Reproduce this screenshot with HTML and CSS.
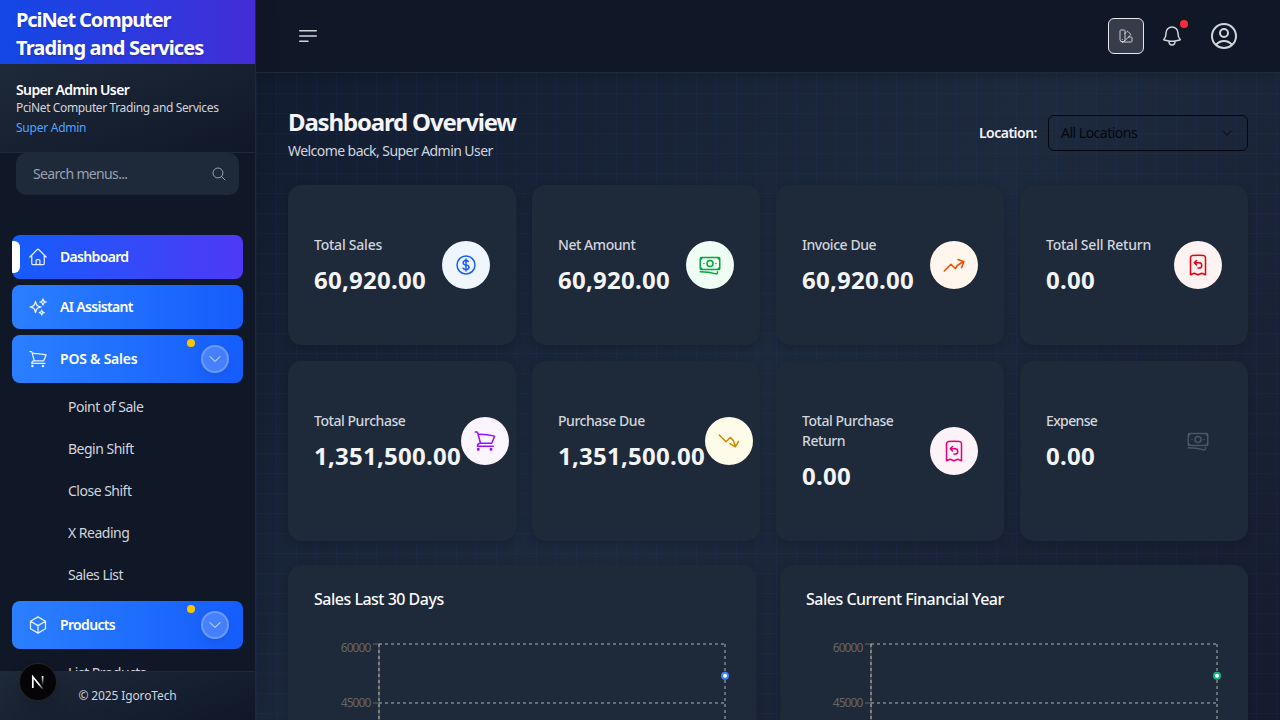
FILE: index.html
```html
<!DOCTYPE html>
<html lang="en">
<head>
<meta charset="utf-8">
<title>Dashboard</title>
<link rel="stylesheet" href="styles.css">
</head>
<body>
<svg class="defs" width="0" height="0">
  <symbol id="home" viewBox="0 0 24 24"><path d="m2.25 12 8.954-8.955c.44-.439 1.152-.439 1.591 0L21.75 12M4.5 9.75v10.125c0 .621.504 1.125 1.125 1.125H9.75v-4.875c0-.621.504-1.125 1.125-1.125h2.25c.621 0 1.125.504 1.125 1.125V21h4.125c.621 0 1.125-.504 1.125-1.125V9.75M8.25 21h8.25"/></symbol>
  <symbol id="sparkles" viewBox="0 0 24 24"><path d="M9.813 15.904 9 18.75l-.813-2.846a4.5 4.5 0 0 0-3.09-3.09L2.25 12l2.846-.813a4.5 4.5 0 0 0 3.09-3.09L9 5.25l.813 2.846a4.5 4.5 0 0 0 3.09 3.09L15.75 12l-2.846.813a4.5 4.5 0 0 0-3.09 3.09ZM18.259 8.715 18 9.75l-.259-1.035a3.375 3.375 0 0 0-2.455-2.456L14.25 6l1.036-.259a3.375 3.375 0 0 0 2.455-2.456L18 2.25l.259 1.035a3.375 3.375 0 0 0 2.456 2.456L21.75 6l-1.035.259a3.375 3.375 0 0 0-2.456 2.456ZM16.894 20.567 16.5 21.75l-.394-1.183a2.25 2.25 0 0 0-1.423-1.423L13.5 18.75l1.183-.394a2.25 2.25 0 0 0 1.423-1.423l.394-1.183.394 1.183a2.25 2.25 0 0 0 1.423 1.423l1.183.394-1.183.394a2.25 2.25 0 0 0-1.423 1.423Z"/></symbol>
  <symbol id="cart" viewBox="0 0 24 24"><path d="M2.25 3h1.386c.51 0 .955.343 1.087.835l.383 1.437M7.5 14.25a3 3 0 0 0-3 3h15.75m-12.75-3h11.218c1.121-2.3 2.1-4.684 2.924-7.138a60.114 60.114 0 0 0-16.536-1.84M7.5 14.25 5.106 5.272M6 20.25a.75.75 0 1 1-1.5 0 .75.75 0 0 1 1.5 0Zm12.75 0a.75.75 0 1 1-1.5 0 .75.75 0 0 1 1.5 0Z"/></symbol>
  <symbol id="cube" viewBox="0 0 24 24"><path d="m21 7.5-9-5.25L3 7.5m18 0-9 5.25m9-5.25v9l-9 5.25M3 7.5l9 5.25M3 7.5v9l9 5.25m0-9v9"/></symbol>
  <symbol id="search" viewBox="0 0 24 24"><path d="m21 21-5.197-5.197m0 0A7.5 7.5 0 1 0 5.196 5.196a7.5 7.5 0 0 0 10.607 10.607Z"/></symbol>
  <symbol id="chevron" viewBox="0 0 24 24"><path d="m19.5 8.25-7.5 7.5-7.5-7.5"/></symbol>
  <symbol id="caret" viewBox="0 0 24 24"><path d="m6 9 6 6 6-6"/></symbol>
  <symbol id="bell" viewBox="0 0 24 24"><path d="M14.857 17.082a23.848 23.848 0 0 0 5.454-1.31A8.967 8.967 0 0 1 18 9.75V9A6 6 0 0 0 6 9v.75a8.967 8.967 0 0 1-2.312 6.022c1.733.64 3.56 1.085 5.455 1.31m5.714 0a24.255 24.255 0 0 1-5.714 0m5.714 0a3 3 0 1 1-5.714 0"/></symbol>
  <symbol id="user" viewBox="0 0 24 24"><path d="M17.982 18.725A7.488 7.488 0 0 0 12 15.75a7.488 7.488 0 0 0-5.982 2.975m11.963 0a9 9 0 1 0-11.963 0m11.963 0A8.966 8.966 0 0 1 12 21a8.966 8.966 0 0 1-5.982-2.275M15 9.75a3 3 0 1 1-6 0 3 3 0 0 1 6 0Z"/></symbol>
  <symbol id="dollar" viewBox="0 0 24 24"><path d="M12 6v12m-3-2.818.879.659c1.171.879 3.07.879 4.242 0 1.172-.879 1.172-2.303 0-3.182C13.536 12.219 12.768 12 12 12c-.725 0-1.45-.22-2.003-.659-1.106-.879-1.106-2.303 0-3.182s2.9-.879 4.006 0l.415.33M21 12a9 9 0 1 1-18 0 9 9 0 0 1 18 0Z"/></symbol>
  <symbol id="banknotes" viewBox="0 0 24 24"><path d="M2.25 18.75a60.07 60.07 0 0 1 15.797 2.101c.727.198 1.453-.342 1.453-1.096V18.75M3.75 4.5v.75A.75.75 0 0 1 3 6h-.75m0 0v-.375c0-.621.504-1.125 1.125-1.125H20.25M2.25 6v9m18-10.5v.75c0 .414.336.75.75.75h.75m-1.5-1.5h.375c.621 0 1.125.504 1.125 1.125v9.75c0 .621-.504 1.125-1.125 1.125h-.375m1.5-1.5H21a.75.75 0 0 0-.75.75v.75m0 0H3.75m0 0h-.375a1.125 1.125 0 0 1-1.125-1.125V15m1.5 1.5v-.75A.75.75 0 0 0 3 15h-.75M15 10.5a3 3 0 1 1-6 0 3 3 0 0 1 6 0Zm3 0h.008v.008H18V10.5Zm-12 0h.008v.008H6V10.5Z"/></symbol>
  <symbol id="up" viewBox="0 0 24 24"><path d="M2.25 18 9 11.25l4.306 4.306a11.95 11.95 0 0 1 5.814-5.518l2.74-1.22m0 0-5.94-2.281m5.94 2.28-2.28 5.941"/></symbol>
  <symbol id="down" viewBox="0 0 24 24"><path d="M2.25 6 9 12.75l4.286-4.286a11.948 11.948 0 0 1 4.306 6.43l.776 2.898m0 0 3.182-5.511m-3.182 5.51-5.511-3.181"/></symbol>
  <symbol id="refund" viewBox="0 0 24 24"><path d="M8.25 9.75h4.875a2.625 2.625 0 0 1 0 5.25H12M8.25 9.75 10.5 7.5M8.25 9.75 10.5 12m9-7.243V21.75l-3.75-1.5-3.75 1.5-3.75-1.5-3.75 1.5V4.757c0-1.108.806-2.057 1.907-2.185a48.507 48.507 0 0 1 11.186 0c1.1.128 1.907 1.077 1.907 2.185Z"/></symbol>
  <symbol id="swatch" viewBox="0 0 24 24"><path d="M4.098 19.902a3.75 3.75 0 0 0 5.304 0l6.401-6.402M6.75 21A3.75 3.75 0 0 1 3 17.25V4.125C3 3.504 3.504 3 4.125 3h5.25c.621 0 1.125.504 1.125 1.125v4.072M6.75 21a3.75 3.75 0 0 0 3.75-3.75V8.197M6.75 21h13.125c.621 0 1.125-.504 1.125-1.125v-5.25c0-.621-.504-1.125-1.125-1.125h-4.072M10.5 8.197l2.88-2.88c.438-.439 1.15-.439 1.59 0l3.712 3.713c.44.44.44 1.152 0 1.59l-2.879 2.88M6.75 17.25h.008v.008H6.75v-.008Z"/></symbol>
  <symbol id="bars" viewBox="0 0 24 24"><path d="M3.75 6.75h16.5M3.75 12h16.5m-16.5 5.25H12"/></symbol>
</svg>
<div class="app">
  <aside class="sidebar">
    <div class="brand"><div class="brand-top">PciNet Computer</div><div>Trading and Services</div></div>
    <div class="profile">
      <div class="profile-name">Super Admin User</div>
      <div class="profile-org">PciNet Computer Trading and Services</div>
      <div class="profile-role">Super Admin</div>
    </div>
    <div class="search"><span>Search menus...</span><svg class="icon i16"><use href="#search"/></svg></div>
    <nav class="nav">
      <a class="item active"><svg class="icon i20"><use href="#home"/></svg><span>Dashboard</span></a>
      <a class="item"><svg class="icon i20"><use href="#sparkles"/></svg><span>AI Assistant</span></a>
      <a class="item group"><svg class="icon i20"><use href="#cart"/></svg><span class="loose">POS &amp; Sales</span><b class="toggle"><svg class="icon i16"><use href="#chevron"/></svg></b></a>
      <div class="sub">
        <a>Point of Sale</a><a>Begin Shift</a><a>Close Shift</a><a>X Reading</a><a>Sales List</a>
      </div>
      <a class="item group"><svg class="icon i20"><use href="#cube"/></svg><span>Products</span><b class="toggle"><svg class="icon i16"><use href="#chevron"/></svg></b></a>
      <div class="sub"><a>List Products</a></div>
    </nav>
    <div class="footer">© 2025 IgoroTech</div>
    <div class="badge"><svg width="36" height="36" viewBox="0 0 36 36" fill="none"><defs><linearGradient id="nd" x1="16" y1="15" x2="23" y2="24" gradientUnits="userSpaceOnUse"><stop offset=".5" stop-color="#fff"/><stop offset="1" stop-color="#fff" stop-opacity=".2"/></linearGradient><linearGradient id="nv" x1="0" y1="12" x2="0" y2="21" gradientUnits="userSpaceOnUse"><stop stop-color="#fff"/><stop offset="1" stop-color="#fff" stop-opacity="0"/></linearGradient></defs><path d="M12.8 24V12.8L22.8 25" stroke="url(#nd)" stroke-width="1.7"/><path d="M22.6 12v9" stroke="url(#nv)" stroke-width="1.7"/></svg></div>
  </aside>
  <div class="page">
    <header class="topbar">
      <svg class="icon i24"><use href="#bars"/></svg>
      <div class="actions">
        <button class="theme"><svg class="icon i16"><use href="#swatch"/></svg></button>
        <div class="bell"><svg class="icon i24"><use href="#bell"/></svg></div>
        <svg class="icon i32"><use href="#user"/></svg>
      </div>
    </header>
    <main class="content">
      <div class="heading">
        <div>
          <h1>Dashboard Overview</h1>
          <p>Welcome back, Super Admin User</p>
        </div>
        <div class="location"><label>Location:</label><div class="select"><span>All Locations</span><svg class="icon i16"><use href="#caret"/></svg></div></div>
      </div>
      <section class="cards">
        <div class="card"><div class="stat"><h3 class="loose">Total Sales</h3><strong>60,920.00</strong></div><div class="dot blue"><svg class="icon i24"><use href="#dollar"/></svg></div></div>
        <div class="card"><div class="stat"><h3>Net Amount</h3><strong>60,920.00</strong></div><div class="dot green"><svg class="icon i24"><use href="#banknotes"/></svg></div></div>
        <div class="card"><div class="stat"><h3>Invoice Due</h3><strong>60,920.00</strong></div><div class="dot orange"><svg class="icon i24"><use href="#up"/></svg></div></div>
        <div class="card"><div class="stat"><h3 class="loose">Total Sell Return</h3><strong>0.00</strong></div><div class="dot red"><svg class="icon i24"><use href="#refund"/></svg></div></div>
        <div class="card"><div class="stat"><h3>Total Purchase</h3><strong>1,351,500.00</strong></div><div class="dot purple"><svg class="icon i24"><use href="#cart"/></svg></div></div>
        <div class="card"><div class="stat"><h3>Purchase Due</h3><strong>1,351,500.00</strong></div><div class="dot yellow"><svg class="icon i24"><use href="#down"/></svg></div></div>
        <div class="card"><div class="stat"><h3>Total Purchase<br>Return</h3><strong>0.00</strong></div><div class="dot pink"><svg class="icon i24"><use href="#refund"/></svg></div></div>
        <div class="card"><div class="stat"><h3 class="tight">Expense</h3><strong>0.00</strong></div><div class="dot plain"><svg class="icon i24"><use href="#banknotes"/></svg></div></div>
      </section>
      <section class="charts">
        <div class="panel">
          <h2>Sales Last 30 Days</h2>
          <svg class="chart" width="416" height="300">
            <g class="axis"><path d="M65 5V239M59 5h6M59 64h6M59 122h6"/></g>
            <g class="grid"><path d="M65 5H411M65 64H411M65 122H411M65 5V239M411 5V239"/></g>
            <text x="56.5" y="13">60000</text><text x="56.5" y="68">45000</text>
            <circle cx="411" cy="36.7" r="3" class="pt-blue"/>
          </svg>
        </div>
        <div class="panel">
          <h2>Sales Current Financial Year</h2>
          <svg class="chart" width="416" height="300">
            <g class="axis"><path d="M65 5V239M59 5h6M59 64h6M59 122h6"/></g>
            <g class="grid"><path d="M65 5H411M65 64H411M65 122H411M65 5V239M411 5V239"/></g>
            <text x="56.5" y="13">60000</text><text x="56.5" y="68">45000</text>
            <circle cx="411" cy="36.7" r="3" class="pt-green"/>
          </svg>
        </div>
      </section>
    </main>
  </div>
</div>
</body>
</html>
```
FILE: styles.css
```css
* { box-sizing: border-box; margin: 0; padding: 0; }
body { width: 1280px; height: 720px; overflow: hidden; background: #101828; font-family: "Noto Sans", "Open Sans", sans-serif; font-size: 14px; line-height: 20px; letter-spacing: -.5px; color: #f3f4f6; }
.defs { position: absolute; }
.icon { fill: none; stroke: currentColor; stroke-width: 1.5; stroke-linecap: round; stroke-linejoin: round; flex: none; display: block; }
.i16 { width: 16px; height: 16px; }
.i20 { width: 20px; height: 20px; }
.i24 { width: 24px; height: 24px; }
.i32 { width: 32px; height: 32px; }
.app { display: flex; height: 720px; }

.sidebar { position: relative; width: 256px; flex: none; display: flex; flex-direction: column; border-right: 1px solid #1e2939; background: #101828; box-shadow: 0 0 24px rgba(0,0,0,.12); z-index: 2; }
.brand { height: 64px; padding: 6px 16px; line-height: 28px; font-size: 20px; font-weight: 700; color: #fff; background: linear-gradient(90deg, #1447e6, #432dd7); white-space: nowrap; flex: none; text-shadow: 0 1px 2px rgba(0,0,0,.2); letter-spacing: -.87px; }
.brand-top { letter-spacing: -1.1px; }
.profile { height: 89px; flex: none; padding: 16px; border-bottom: 1px solid #1e2939; background: linear-gradient(160deg, #1e2939, #101828); white-space: nowrap; }
.profile-name { font-weight: 600; color: #fff; letter-spacing: -.62px; }
.profile-org { font-size: 12px; line-height: 16px; color: #d1d5dc; letter-spacing: -.37px; }
.profile-role { font-size: 12px; line-height: 16px; margin-top: 4px; color: #51a2ff; letter-spacing: -.25px; }
.search { flex: none; height: 42px; margin: 0 16px; padding: 0 12px 0 17px; display: flex; align-items: center; justify-content: space-between; background: #1e2939; border-radius: 10px; color: #99a1af; letter-spacing: -.65px; }
.nav { flex: 1; min-height: 0; overflow: hidden; padding: 40px 12px 0; display: flex; flex-direction: column; }
.item { position: relative; flex: none; height: 44px; margin-bottom: 6px; padding: 0 14px 0 16px; display: flex; align-items: center; gap: 12px; border-radius: 8px; background: linear-gradient(90deg, #2b7fff, #155dfc); color: #fff; font-weight: 600; letter-spacing: -.67px; overflow: hidden; }
.item.active { background: linear-gradient(90deg, #155dfc, #4f39f6); }
.item.active::before { content: ""; position: absolute; left: 0; top: 6px; width: 8px; height: 32px; background: #fff; border-radius: 0 6px 6px 0; }
.item.group { height: 48px; margin-bottom: 3px; }
.item.group::after { content: ""; position: absolute; right: 48px; top: 4px; width: 8px; height: 8px; border-radius: 50%; background: #fdc700; }
.item .icon { opacity: .9; }
.toggle { width: 28px; height: 28px; margin-left: auto; border-radius: 50%; border: 2px solid rgba(255,255,255,.2); background: rgba(255,255,255,.2); display: flex; align-items: center; justify-content: center; box-shadow: 0 4px 8px rgba(0,0,0,.08); }
.sub { flex: none; padding-left: 56px; margin-bottom: 5px; }
.sub a { display: flex; align-items: center; height: 42px; color: #d1d5dc; }
.loose { letter-spacing: -.23px; }
.tight { letter-spacing: -.65px; }
.footer { flex: none; height: 49px; border-top: 1px solid #1e2939; background: linear-gradient(160deg, #1e2939, #101828); text-align: center; font-size: 12px; line-height: 48px; color: #d1d5dc; letter-spacing: -.12px; }
.badge { position: absolute; left: 20px; top: 664px; width: 36px; height: 36px; border-radius: 50%; background: #050507; box-shadow: 0 0 0 1px #232323, 0 12px 24px -8px rgba(0,0,0,.4); }

.page { flex: 1; min-width: 0; display: flex; flex-direction: column; }
.topbar { flex: none; height: 73px; padding: 0 40px; display: flex; align-items: center; justify-content: space-between; background: #101828; border-bottom: 1px solid #1e2939; color: #d1d5dc; box-shadow: 0 2px 8px rgba(0,0,0,.2); position: relative; }
.actions { display: flex; align-items: center; gap: 16px; }
.theme { width: 36px; height: 36px; border: 1px solid #e5e7eb; border-radius: 6px; background: #363c49; color: #c9cdd3; display: flex; align-items: center; justify-content: center; }
.bell { position: relative; margin-right: 8px; }
.bell::after { content: ""; position: absolute; right: -4px; top: -4px; width: 8px; height: 8px; border-radius: 50%; background: #fb2c36; }
.content { flex: 1; min-height: 0; overflow: hidden; padding: 32px; background: repeating-linear-gradient(90deg, rgba(43,100,210,.06) 0 1px, transparent 1px 20px), repeating-linear-gradient(180deg, rgba(43,100,210,.06) 0 1px, transparent 1px 20px), linear-gradient(135deg, #121c30, #1d293d 50%, #151b2e); }
.heading { height: 56px; margin-bottom: 24px; display: flex; justify-content: space-between; align-items: center; }
h1 { font-size: 24px; line-height: 32px; font-weight: 700; letter-spacing: -1.17px; }
.heading p { margin-top: 3px; color: #d1d5dc; letter-spacing: -.56px; }
.location { display: flex; align-items: center; gap: 11px; font-weight: 600; }
.select { width: 200px; height: 36px; border: 1px solid #04070c; border-radius: 6px; padding: 0 12px; display: flex; align-items: center; justify-content: space-between; color: #04070c; font-weight: 400; }
.select .icon { opacity: .5; stroke-width: 2; }
.cards { display: grid; grid-template-columns: repeat(4, 228px); grid-template-rows: 160px 180px; gap: 16px; margin-bottom: 24px; }
.card { height: 100%; padding: 50px 26px; border-radius: 14px; background: #1e2939; box-shadow: 0 3px 8px rgba(0,0,0,.15); display: flex; align-items: center; justify-content: space-between; }
.card:nth-child(n+5) { padding-bottom: 70px; }
.card:nth-child(7) { padding-bottom: 50px; }
h3 { font-size: 14px; line-height: 20px; font-weight: 500; color: #d1d5dc; letter-spacing: -.45px; }
h3.loose { letter-spacing: -.23px; }
h3.tight { letter-spacing: -.65px; }
.stat strong { display: block; padding-top: 9px; font-size: 24px; line-height: 31px; font-weight: 700; letter-spacing: .25px; }
.dot { flex: none; width: 48px; height: 48px; border-radius: 50%; display: flex; align-items: center; justify-content: center; }
.blue { background: #eff6ff; color: #155dfc; }
.green { background: #f0fdf4; color: #00a63e; }
.orange { background: #fff7ed; color: #f54900; }
.red { background: #fef2f2; color: #e7000b; }
.purple { background: #faf5ff; color: #9810fa; }
.yellow { background: #fefce8; color: #d08700; }
.pink { background: #fdf2f8; color: #e60076; }
.plain { color: #4a5565; }
.charts { display: grid; grid-template-columns: 468px 468px; gap: 24px; }
.panel { height: 400px; padding: 26px; border-radius: 14px; background: #1e2939; box-shadow: 0 3px 8px rgba(0,0,0,.15); }
h2 { font-size: 16px; line-height: 16px; font-weight: 500; margin-bottom: 32px; color: #f9fafb; letter-spacing: -.5px; }
.chart { display: block; }
.chart text { font-size: 12px; fill: #666; text-anchor: end; letter-spacing: -.9px; }
.axis path { stroke: #666; fill: none; }
.grid path { stroke: #ccc; stroke-opacity: .85; stroke-width: 1; stroke-dasharray: 3 3; fill: none; }
.pt-blue { fill: #fff; stroke: #3b82f6; stroke-width: 2; }
.pt-green { fill: #fff; stroke: #10b981; stroke-width: 2; }
```
